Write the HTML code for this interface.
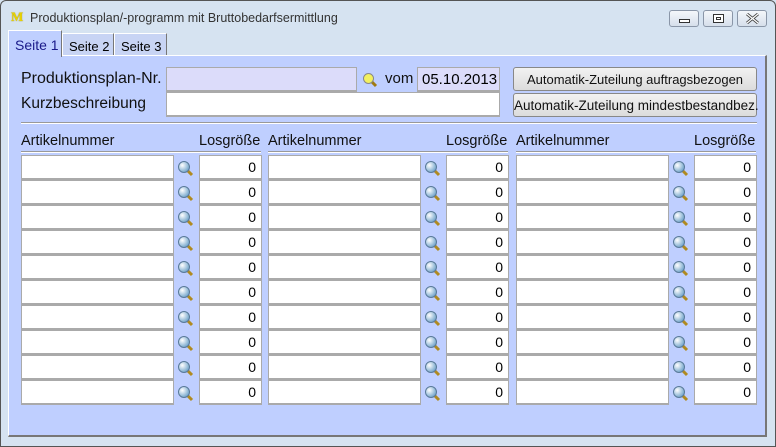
<!DOCTYPE html>
<html><head><meta charset="utf-8"><style>
*{box-sizing:border-box;margin:0;padding:0}
body{width:776px;height:447px;overflow:hidden;font-family:"Liberation Sans",sans-serif;background:#d6e3f1;position:relative}
.win{position:absolute;left:0;top:0;width:776px;height:447px;border:1px solid #555;border-radius:6px 6px 0 0;background:#d6e3f1}
.title{position:absolute;left:30px;top:11px;font-size:12.5px;color:#333;font-family:"Liberation Sans",sans-serif}
.logo{position:absolute;left:11px;top:9px;font:bold 13px "Liberation Serif",serif;color:#e8d200;text-shadow:0 0 1px #8a7a00}
.wb{position:absolute;top:10px;height:17px;border:1px solid #8a96a8;border-radius:3px;background:linear-gradient(#f4f7fb,#d6dfeb)}
.panel{position:absolute;left:8px;top:55px;width:759px;height:382px;background:#bfcfff;border-left:1px solid #fff;border-top:1px solid #fff;border-right:2px solid #777;border-bottom:2px solid #777}
.tab{position:absolute;top:33px;height:23px;font-size:13px;color:#000;padding:5px 0 0 6px;border:1px solid #fff;border-right:1px solid #777;border-bottom:none;background:#c8d4f4}
.tab.a{top:30px;height:27px;background:#bfcfff;color:#1a1a8a;z-index:2;font-size:14px;padding-top:6px}
.lbl{position:absolute;font-size:15px;color:#111;white-space:nowrap}
.in{position:absolute;background:#fff;border:1px solid #aaa;border-bottom:2px solid #aaa}
.btn{position:absolute;left:513px;width:244px;height:24px;border:1px solid #888;border-radius:3px;background:linear-gradient(#f2f2f2,#dcdcdc);font-size:13px;text-align:center;padding-top:4px;color:#111;white-space:nowrap}
.hl{position:absolute;height:2px;background:#999;border-bottom:1px solid #fff}
.g{position:absolute;top:155px}
.r{position:relative;height:25px}
.r .a{position:absolute;left:0;top:0;width:153px;height:25px;background:#fff;border:1px solid #aaa;border-bottom:2px solid #aaa}
.r .b{position:absolute;left:178px;top:0;width:63px;height:25px;background:#fff;border:1px solid #aaa;border-bottom:2px solid #aaa;text-align:right;font-size:14px;padding:3px 5px 0 0}
.r svg{position:absolute;left:156px;top:5px}
</style></head><body>
<div class="win"></div>
<div class="logo">M</div>
<div class="title">Produktionsplan/-programm mit Bruttobedarfsermittlung</div>
<div class="wb" style="left:669px;width:30px"><div style="position:absolute;left:9px;top:8px;width:11px;height:4px;border:1px solid #333;background:#fff"></div></div>
<div class="wb" style="left:703px;width:30px"><div style="position:absolute;left:9px;top:3px;width:11px;height:9px;border:1px solid #333;background:#fff"><div style="margin:2px;height:3px;border:1px solid #333"></div></div></div>
<div class="wb" style="left:737px;width:30px"><svg style="position:absolute;left:8px;top:2px" width="13" height="11"><path d="M1 1L12 10M12 1L1 10" stroke="#444" stroke-width="3"/><path d="M1 1L12 10M12 1L1 10" stroke="#fff" stroke-width="1.2"/></svg></div>
<div class="tab a" style="left:8px;width:54px">Seite 1</div>
<div class="tab" style="left:62px;width:52px">Seite 2</div>
<div class="tab" style="left:114px;width:53px">Seite 3</div>
<div class="panel"></div>

<div class="lbl" style="left:21px;top:70px;font-size:16px">Produktionsplan-Nr.</div>
<div class="in" style="left:166px;top:67px;width:191px;height:25px;background:#dcdcfa"></div>
<svg style="position:absolute;left:362px;top:72px" width="18" height="18" viewBox="0 0 18 18"><line x1="9" y1="9" x2="14" y2="14" stroke="#a07a10" stroke-width="3"/><circle cx="6.5" cy="6.5" r="5" fill="#f2f060" stroke="#888"/></svg>
<div class="lbl" style="left:385px;top:70px">vom</div>
<div class="in" style="left:417px;top:67px;width:83px;height:25px;background:#dcdcfa;font-size:15px;padding:3px 0 0 4px">05.10.2013</div>
<div class="lbl" style="left:21px;top:95px;font-size:15.5px">Kurzbeschreibung</div>
<div class="in" style="left:166px;top:92px;width:334px;height:25px"></div>
<div class="btn" style="top:67px">Automatik-Zuteilung auftragsbezogen</div>
<div class="btn" style="top:93px;font-size:13.5px">Automatik-Zuteilung mindestbestandbez.</div>
<div class="hl" style="left:21px;top:122px;width:736px"></div>

<div class="lbl" style="left:21px;top:133px;font-size:14.5px">Artikelnummer</div>
<div class="lbl" style="left:199px;top:133px;font-size:14.5px">Losgröße</div>
<div class="lbl" style="left:268px;top:133px;font-size:14.5px">Artikelnummer</div>
<div class="lbl" style="left:446px;top:133px;font-size:14.5px">Losgröße</div>
<div class="lbl" style="left:516px;top:133px;font-size:14.5px">Artikelnummer</div>
<div class="lbl" style="left:694px;top:133px;font-size:14.5px">Losgröße</div>
<div class="hl" style="left:21px;top:151px;width:240px"></div>
<div class="hl" style="left:268px;top:151px;width:240px"></div>
<div class="hl" style="left:516px;top:151px;width:240px"></div>

<svg width="0" height="0" style="position:absolute"><defs>
<radialGradient id="lg" cx="35%" cy="35%" r="70%"><stop offset="0" stop-color="#fff"/><stop offset="1" stop-color="#6aa0c8"/></radialGradient>
<symbol id="m" viewBox="0 0 18 18"><line x1="9" y1="9" x2="15" y2="15" stroke="#b08a20" stroke-width="3"/><circle cx="7" cy="7" r="5.5" fill="url(#lg)" stroke="#5a7a99"/></symbol></defs></svg>

<div class="g" style="left:21px">
<div class="r"><div class="a"></div><svg width="18" height="18"><use href="#m"/></svg><div class="b">0</div></div>
<div class="r"><div class="a"></div><svg width="18" height="18"><use href="#m"/></svg><div class="b">0</div></div>
<div class="r"><div class="a"></div><svg width="18" height="18"><use href="#m"/></svg><div class="b">0</div></div>
<div class="r"><div class="a"></div><svg width="18" height="18"><use href="#m"/></svg><div class="b">0</div></div>
<div class="r"><div class="a"></div><svg width="18" height="18"><use href="#m"/></svg><div class="b">0</div></div>
<div class="r"><div class="a"></div><svg width="18" height="18"><use href="#m"/></svg><div class="b">0</div></div>
<div class="r"><div class="a"></div><svg width="18" height="18"><use href="#m"/></svg><div class="b">0</div></div>
<div class="r"><div class="a"></div><svg width="18" height="18"><use href="#m"/></svg><div class="b">0</div></div>
<div class="r"><div class="a"></div><svg width="18" height="18"><use href="#m"/></svg><div class="b">0</div></div>
<div class="r"><div class="a"></div><svg width="18" height="18"><use href="#m"/></svg><div class="b">0</div></div>
</div>
<div class="g" style="left:268px">
<div class="r"><div class="a"></div><svg width="18" height="18"><use href="#m"/></svg><div class="b">0</div></div>
<div class="r"><div class="a"></div><svg width="18" height="18"><use href="#m"/></svg><div class="b">0</div></div>
<div class="r"><div class="a"></div><svg width="18" height="18"><use href="#m"/></svg><div class="b">0</div></div>
<div class="r"><div class="a"></div><svg width="18" height="18"><use href="#m"/></svg><div class="b">0</div></div>
<div class="r"><div class="a"></div><svg width="18" height="18"><use href="#m"/></svg><div class="b">0</div></div>
<div class="r"><div class="a"></div><svg width="18" height="18"><use href="#m"/></svg><div class="b">0</div></div>
<div class="r"><div class="a"></div><svg width="18" height="18"><use href="#m"/></svg><div class="b">0</div></div>
<div class="r"><div class="a"></div><svg width="18" height="18"><use href="#m"/></svg><div class="b">0</div></div>
<div class="r"><div class="a"></div><svg width="18" height="18"><use href="#m"/></svg><div class="b">0</div></div>
<div class="r"><div class="a"></div><svg width="18" height="18"><use href="#m"/></svg><div class="b">0</div></div>
</div>
<div class="g" style="left:516px">
<div class="r"><div class="a"></div><svg width="18" height="18"><use href="#m"/></svg><div class="b">0</div></div>
<div class="r"><div class="a"></div><svg width="18" height="18"><use href="#m"/></svg><div class="b">0</div></div>
<div class="r"><div class="a"></div><svg width="18" height="18"><use href="#m"/></svg><div class="b">0</div></div>
<div class="r"><div class="a"></div><svg width="18" height="18"><use href="#m"/></svg><div class="b">0</div></div>
<div class="r"><div class="a"></div><svg width="18" height="18"><use href="#m"/></svg><div class="b">0</div></div>
<div class="r"><div class="a"></div><svg width="18" height="18"><use href="#m"/></svg><div class="b">0</div></div>
<div class="r"><div class="a"></div><svg width="18" height="18"><use href="#m"/></svg><div class="b">0</div></div>
<div class="r"><div class="a"></div><svg width="18" height="18"><use href="#m"/></svg><div class="b">0</div></div>
<div class="r"><div class="a"></div><svg width="18" height="18"><use href="#m"/></svg><div class="b">0</div></div>
<div class="r"><div class="a"></div><svg width="18" height="18"><use href="#m"/></svg><div class="b">0</div></div>
</div>
</body></html>
